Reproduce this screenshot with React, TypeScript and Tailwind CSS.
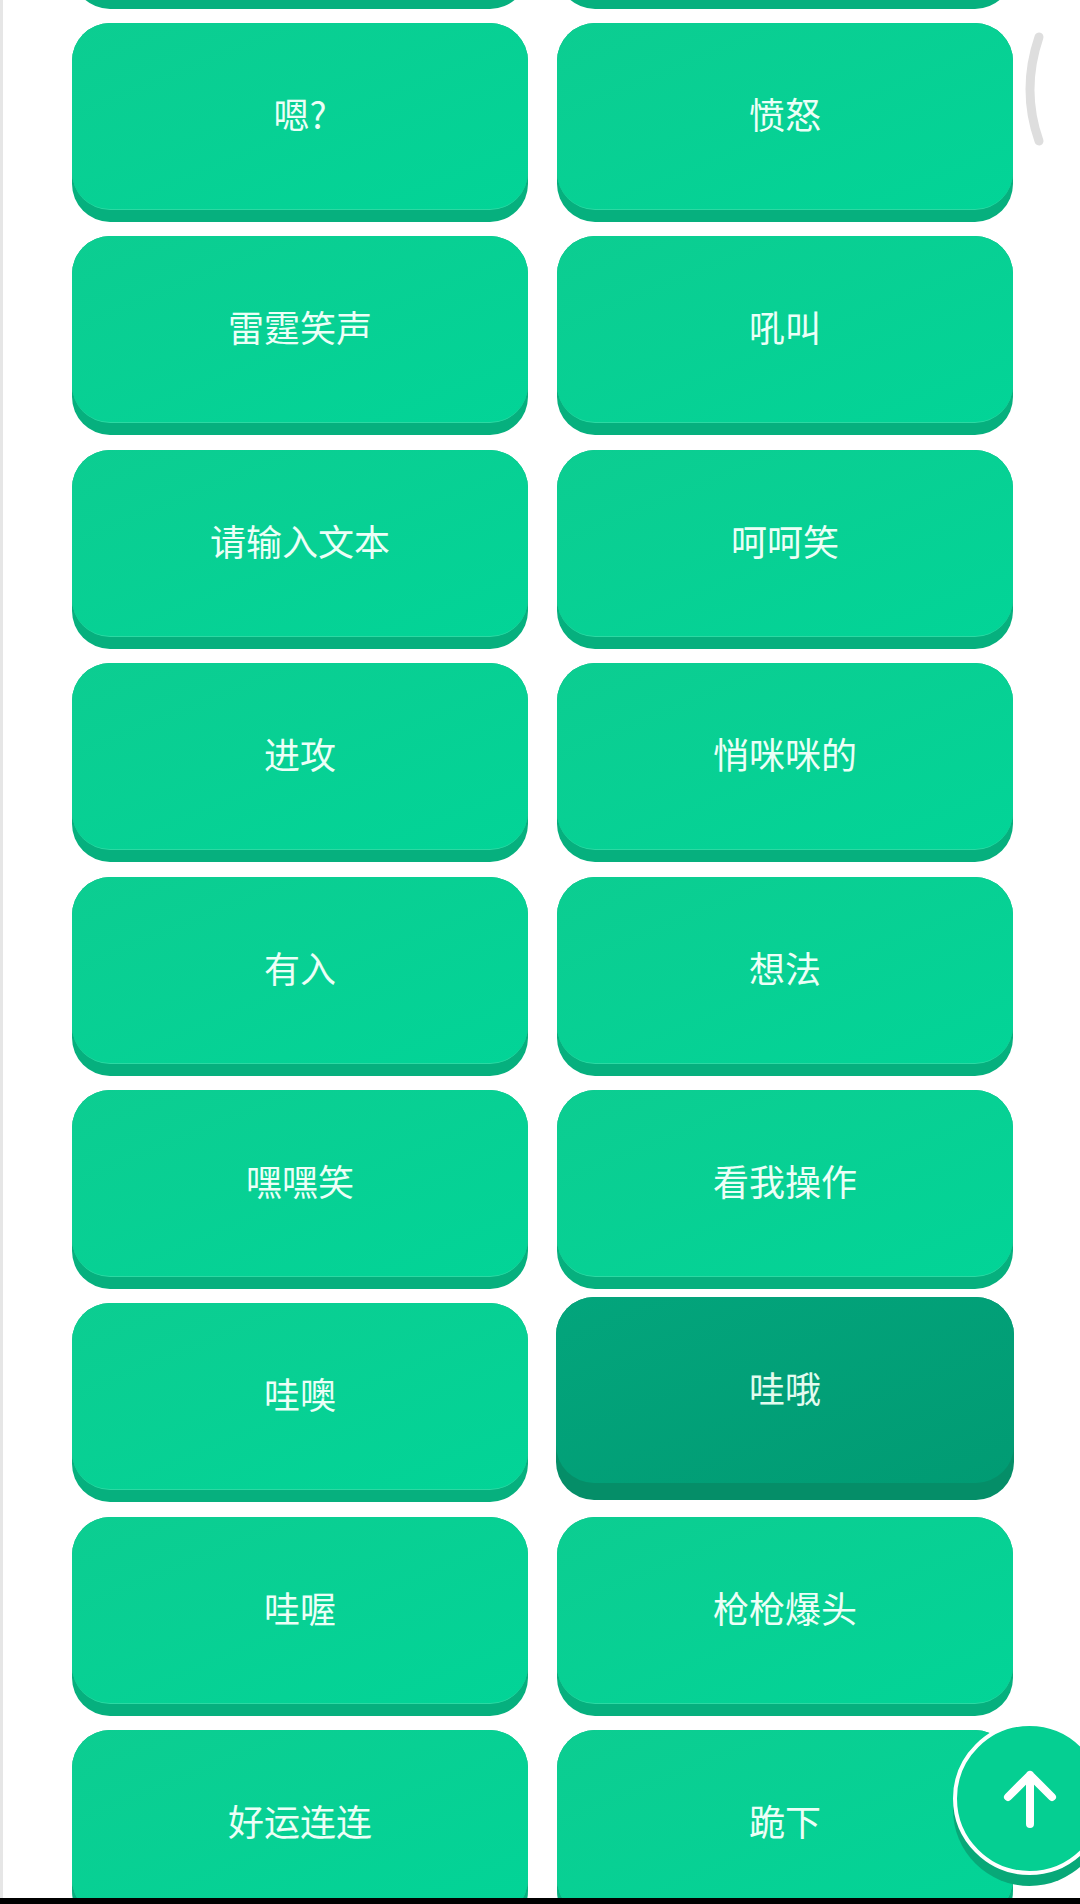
import React from "react";

// --- DATOS: filas de botones de sonido (la fila 0 queda cortada arriba) ---
const rows: [string, string][] = [
  ["", ""],
  ["嗯?", "愤怒"],
  ["雷霆笑声", "吼叫"],
  ["请输入文本", "呵呵笑"],
  ["进攻", "悄咪咪的"],
  ["有入", "想法"],
  ["嘿嘿笑", "看我操作"],
  ["哇噢", "哇哦"],
  ["哇喔", "枪枪爆头"],
  ["好运连连", "跪下"],
];

const PRESSED = "哇哦";

function SoundButton({ label, pressed }: { label: string; pressed?: boolean }) {
  if (pressed) {
    return (
      <div className="-mt-[6px] -mx-[1px] h-[203px] rounded-[38px] bg-[#058e68]">
        <div className="h-[186px] rounded-[38px] bg-gradient-to-br from-[#03a57c] to-[#019b73] flex items-center justify-center pb-[6px]">
          <span className="text-[36px] text-[#e3fbef]">{label}</span>
        </div>
      </div>
    );
  }
  return (
    <div className="h-[199px] rounded-[38px] bg-[#06b07e]">
      <div className="h-[187px] rounded-[38px] bg-gradient-to-br from-[#0ccd91] to-[#02d497] border-b border-[#2cd9a3] flex items-center justify-center pb-[6px]">
        <span className="text-[36px] text-[#ecfff7]">{label}</span>
      </div>
    </div>
  );
}

export default function App() {
  return (
    <div
      className="w-[1080px] h-[1904px] flex flex-col bg-white overflow-hidden"
      style={{ fontFamily: '"Noto Sans CJK SC", "Noto Sans", sans-serif' }}
    >
      <main className="relative h-[1898px] overflow-hidden border-l-[3px] border-[#e6e6e6]">
        {/* rejilla de botones */}
        <div className="-mt-[190.4px] pl-[69px] pr-[67px] grid grid-cols-2 gap-x-[29px] gap-y-[14.4px]">
          {rows.map(([a, b], i) => (
            <React.Fragment key={i}>
              <SoundButton label={a} pressed={a === PRESSED} />
              <SoundButton label={b} pressed={b === PRESSED} />
            </React.Fragment>
          ))}
        </div>

        {/* indicador de scroll */}
        <svg className="absolute left-[1010px] top-[28px]" width="40" height="124" viewBox="0 0 40 124">
          <path d="M26 9 Q8 62 26 113" fill="none" stroke="#dedede" strokeWidth="9" strokeLinecap="round" />
        </svg>

        {/* botón flotante: volver arriba */}
        <button className="absolute left-[950px] top-[1722px] w-[153px] h-[153px] rounded-full bg-[#05cf92] border-[4px] border-white shadow-[0_11px_0_#08a878] flex items-center justify-center">
          <svg width="60" height="64" viewBox="0 0 60 64">
            <path d="M30 8 L30 57 M8 30 L30 8 L52 30" fill="none" stroke="white" strokeWidth="8" strokeLinecap="round" strokeLinejoin="round" />
          </svg>
        </button>
      </main>
      <div className="h-[6px] bg-black" />
    </div>
  );
}
